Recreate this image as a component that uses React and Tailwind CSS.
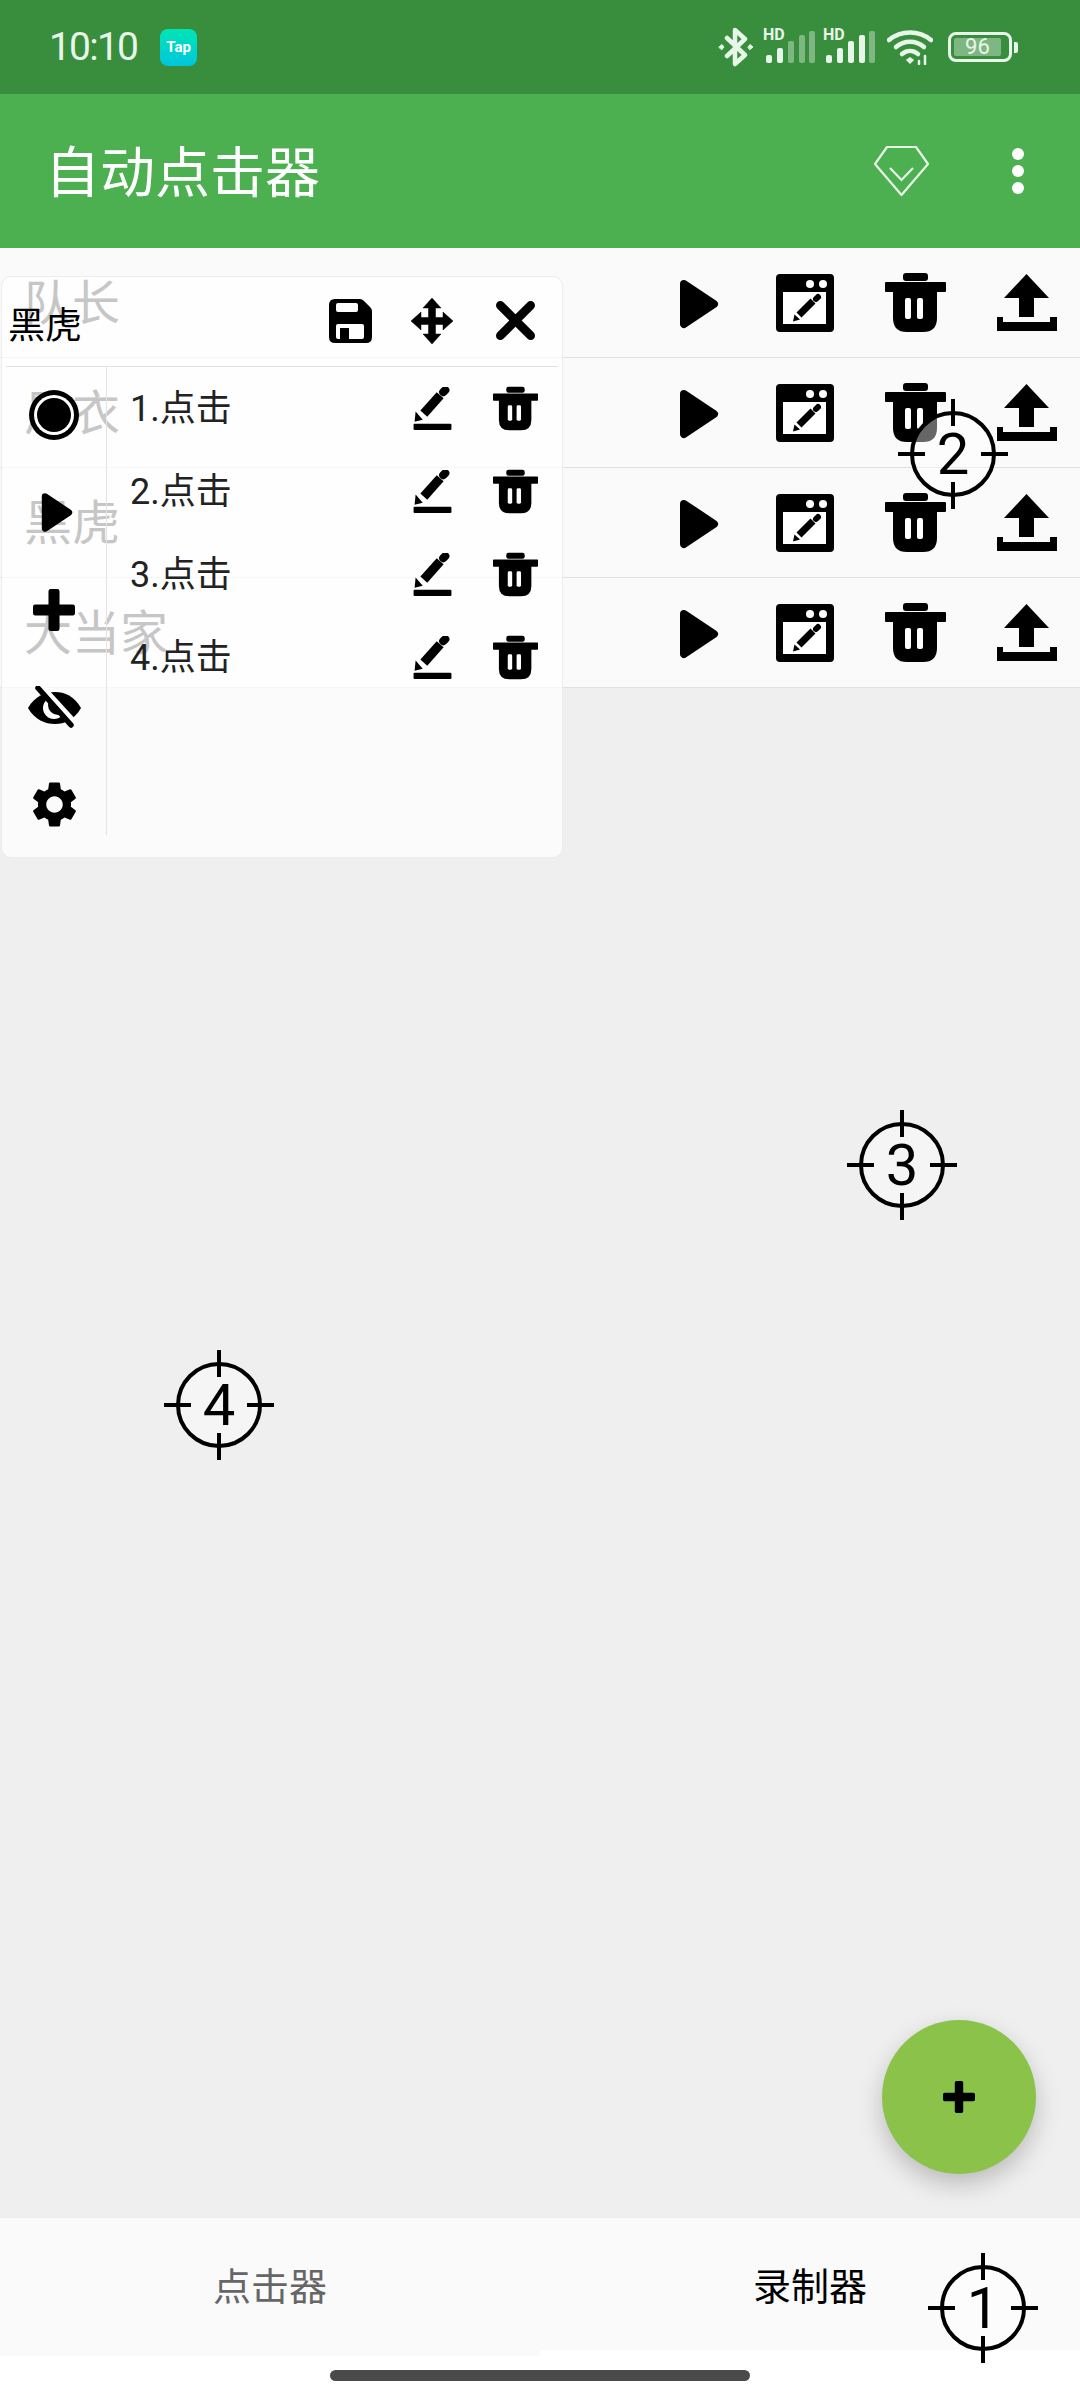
function Play({ w = 40, h = 50 }) {
  return (
    <svg width={w} height={h} viewBox="0 0 40 50" className="block">
      <path d="M5 5 L35 25 L5 45 Z" fill="#000" stroke="#000" strokeWidth="8" strokeLinejoin="round" />
    </svg>
  );
}
function WindowEdit() {
  return (
    <svg width="58" height="58" viewBox="0 0 58 58" className="block">
      <rect width="58" height="58" rx="4" fill="#000" />
      <rect x="7" y="18" width="43" height="32" fill="#fff" />
      <circle cx="34" cy="10" r="4" fill="#fff" />
      <circle cx="47" cy="10" r="4" fill="#fff" />
      <path d="M23 41 L37 27" stroke="#000" strokeWidth="7" />
      <path d="M40 25 L42 23" stroke="#000" strokeWidth="6" strokeLinecap="round" />
      <path d="M17 47.5 L18.5 40.5 L24 45.5 Z" fill="#000" />
    </svg>
  );
}
function Trash({ w = 61, h = 59 }) {
  return (
    <svg width={w} height={h} viewBox="0 0 61 59" className="block">
      <rect x="18" y="0" width="25" height="8" rx="3" fill="#000" />
      <rect x="0" y="9" width="61" height="10" rx="1" fill="#000" />
      <path d="M8 17 H52 V45 Q52 59 38 59 H22 Q8 59 8 45 Z" fill="#000" />
      <rect x="20" y="25" width="6" height="21" rx="2" fill="#fff" />
      <rect x="32" y="25" width="6" height="21" rx="2" fill="#fff" />
    </svg>
  );
}
function Upload() {
  return (
    <svg width="60" height="57" viewBox="0 0 60 57" className="block">
      <path d="M29.5 0 L52 24 H37 V43 H22 V24 H7 Z" fill="#000" />
      <path d="M0 43 H6 V48 H53 V43 H60 V57 H0 Z" fill="#000" />
    </svg>
  );
}
function Pen() {
  return (
    <svg width="43" height="44" viewBox="0 0 37 43" className="block">
      <rect x="0" y="36" width="37" height="6" rx="1" fill="#000" />
      <path d="M10 26 L26 8" stroke="#000" strokeWidth="9" />
      <path d="M29 5 L31 3" stroke="#000" strokeWidth="8" strokeLinecap="round" />
      <path d="M1 34 L2 24 L9 32 Z" fill="#000" />
    </svg>
  );
}
function Save() {
  return (
    <svg width="43" height="44" viewBox="0 0 43 44" className="block">
      <path d="M6 0 H31 Q33 0 35 2 L41 8 Q43 10 43 12 V38 Q43 44 37 44 H6 Q0 44 0 38 V6 Q0 0 6 0 Z" fill="#000" />
      <rect x="7" y="4" width="22" height="9" rx="2" fill="#fff" />
      <rect x="7" y="25" width="28" height="15" rx="2" fill="#fff" />
      <rect x="11" y="29" width="9" height="13" fill="#000" />
    </svg>
  );
}
function Move() {
  return (
    <svg width="44" height="46" viewBox="0 0 42 46" className="block">
      <path d="M21 0 L30 10 H24.5 V19.5 H32 V14 L42 23 L32 32 V26.5 H24.5 V36 H30 L21 46 L12 36 H17.5 V26.5 H10 V32 L0 23 L10 14 V19.5 H17.5 V10 H12 Z" fill="#000" stroke="#000" strokeWidth="0.5" strokeLinejoin="round" />
    </svg>
  );
}
function Close() {
  return (
    <svg width="39" height="39" viewBox="0 0 36 36" className="block">
      <path d="M4 4 L32 32 M32 4 L4 32" stroke="#000" strokeWidth="8" strokeLinecap="round" />
    </svg>
  );
}
function Record() {
  return (
    <svg width="50" height="50" viewBox="0 0 50 50" className="block">
      <circle cx="25" cy="25" r="25" fill="#000" />
      <circle cx="25" cy="25" r="20" fill="#fff" />
      <circle cx="25" cy="25" r="17" fill="#000" />
    </svg>
  );
}
function Plus({ size = 42 }) {
  return (
    <svg width={size} height={size} viewBox="0 0 38 38" className="block">
      <path d="M16 0 H22 Q24 0 24 2 V14 H36 Q38 14 38 16 V22 Q38 24 36 24 H24 V36 Q24 38 22 38 H16 Q14 38 14 36 V24 H2 Q0 24 0 22 V16 Q0 14 2 14 H14 V2 Q14 0 16 0 Z" fill="#000" />
    </svg>
  );
}
function EyeOff() {
  return (
    <svg width="55" height="42" viewBox="0 0 55 42" className="block">
      <path d="M1 22 C8 10 18 6 28 6 C38 6 47 10 54 22 C47 34 38 38 28 38 C18 38 8 34 1 22 Z" fill="#000" />
      <circle cx="27" cy="22" r="11" fill="#fff" />
      <circle cx="31" cy="19" r="10" fill="#000" />
      <path d="M13 1 L45 36" stroke="#fff" strokeWidth="9" />
      <path d="M11 2 L44 39" stroke="#000" strokeWidth="5.5" strokeLinecap="round" />
    </svg>
  );
}
function Gear() {
  return (
    <svg width="55" height="55" viewBox="0 0 24 24" className="block">
      <path fill="#000" d="M19.14 12.94c.04-.3.06-.61.06-.94 0-.32-.02-.64-.07-.94l2.03-1.58c.18-.14.23-.41.12-.61l-1.92-3.32c-.12-.22-.37-.29-.59-.22l-2.39.96c-.5-.38-1.03-.7-1.62-.94l-.36-2.54c-.04-.24-.24-.41-.48-.41h-3.84c-.24 0-.43.17-.47.41l-.36 2.54c-.59.24-1.13.57-1.62.94l-2.39-.96c-.22-.08-.47 0-.59.22L2.74 8.87c-.12.21-.08.47.12.61l2.03 1.58c-.05.3-.09.63-.09.94s.02.64.07.94l-2.03 1.58c-.18.14-.23.41-.12.61l1.92 3.32c.12.22.37.29.59.22l2.39-.96c.5.38 1.03.7 1.62.94l.36 2.54c.05.24.24.41.48.41h3.84c.24 0 .44-.17.47-.41l.36-2.54c.59-.24 1.13-.56 1.62-.94l2.39.96c.22.08.47 0 .59-.22l1.92-3.32c.12-.22.07-.47-.12-.61l-2.01-1.58zM12 15.6c-1.98 0-3.6-1.62-3.6-3.6s1.62-3.6 3.6-3.6 3.6 1.62 3.6 3.6-1.62 3.6-3.6 3.6z" />
    </svg>
  );
}
function Diamond() {
  return (
    <svg width="57" height="52" viewBox="0 0 57 52" className="block" fill="none" stroke="#e8f5e9" strokeWidth="2.2">
      <path d="M14 2 H43 L55 19 L28.5 50 L2 19 Z" strokeLinejoin="round" />
      <path d="M17 23 L28.5 35 L40 23" />
    </svg>
  );
}
function Bluetooth() {
  return (
    <svg width="36" height="40" viewBox="0 0 36 40" className="block" fill="none" stroke="#e8f5e9" strokeWidth="4.5" strokeLinecap="round" strokeLinejoin="round">
      <path d="M9 11 L27 28 L17 37 V3 L27 12 L9 29" />
      <path d="M1 20 L4 17.5 L6 20 L4 22.5 Z M30 20 L32 17.5 L35 20 L32 22.5 Z" fill="#e8f5e9" strokeWidth="1" />
    </svg>
  );
}
function Signal({ on }) {
  const bars = [
    { x: 3, h: 8 },
    { x: 14, h: 15 },
    { x: 25, h: 22 },
    { x: 36, h: 28 },
    { x: 46, h: 32 },
  ];
  return (
    <div className="relative w-[52px] h-[36px]">
      <span className="absolute left-0 top-[-2px] text-[16px] leading-[16px] font-bold text-[#e8f5e9] font-['Roboto',sans-serif]">HD</span>
      <svg width="52" height="36" viewBox="0 0 52 36" className="block">
        {bars.map((b, i) => (
          <rect key={b.x} x={b.x} y={34 - b.h} width="6" height={b.h} rx="2" fill="#e8f5e9" opacity={i < on ? 1 : 0.4} />
        ))}
      </svg>
    </div>
  );
}
function Wifi() {
  return (
    <svg width="46" height="36" viewBox="0 0 46 36" className="block" fill="none" stroke="#e8f5e9" strokeWidth="4.5" strokeLinecap="round">
      <path d="M2 11 C14 1 32 1 44 11" />
      <path d="M9 18 C17 11 29 11 37 18" />
      <path d="M15 25 C20 21 26 21 31 25" />
      <path d="M20 31 L23 34 L26 31 L23 29 Z" fill="#e8f5e9" strokeWidth="1.5" />
      <path d="M32 32 V35 M38 27 V35" strokeWidth="2.5" />
    </svg>
  );
}

function Target({ n, className }) {
  return (
    <div className={"absolute z-30 w-[110px] h-[110px] " + className}>
      <div className="absolute left-[12px] top-[12px] w-[86px] h-[86px] rounded-full bg-white/40 border-[4px] border-black" />
      <div className="absolute left-[53px] top-0 w-[4px] h-[27px] bg-black" />
      <div className="absolute left-[53px] bottom-0 w-[4px] h-[27px] bg-black" />
      <div className="absolute top-[53px] left-0 h-[4px] w-[27px] bg-black" />
      <div className="absolute top-[53px] right-0 h-[4px] w-[27px] bg-black" />
      <div className="absolute inset-0 flex items-center justify-center text-[58px] font-normal leading-none text-black font-['Roboto',sans-serif]">
        {n}
      </div>
    </div>
  );
}

function Row({ label }) {
  return (
    <div className="h-[110px] border-b border-[#e0e0e0] bg-[#fafafa] flex items-center pl-6 pr-[23px]">
      <span className="relative z-10 mt-[3px] text-[48px] leading-none text-[#c6c6c6]">{label}</span>
      <div className="ml-auto flex items-center">
        <div className="mt-[2px]"><Play /></div>
        <div className="ml-[57px]"><WindowEdit /></div>
        <div className="ml-[51px]"><Trash /></div>
        <div className="ml-[51px]"><Upload /></div>
      </div>
    </div>
  );
}

function Item({ label }) {
  return (
    <div className="h-[83px] flex items-center pl-[23px] pr-[24px]">
      <span className="flex-1 text-[36px] leading-none text-[#222222]">{label}</span>
      <Pen />
      <div className="ml-[39px]"><Trash w={45} h={45} /></div>
    </div>
  );
}

export default function App() {
  return (
    <div className="relative w-[1080px] h-[2400px] overflow-hidden flex flex-col bg-white font-['Roboto','Noto_Sans_CJK_SC',sans-serif]">
      {/* status bar */}
      <div className="h-[94px] bg-[#388e3c] flex items-center pl-[49px] pr-[62px]">
        <span className="text-[39px] leading-none tracking-[-1.8px] text-[#e8f5e9]">10:10</span>
        <div className="ml-[23px] w-[37px] h-[37px] rounded-[8px] bg-gradient-to-b from-[#00e5b5] to-[#00c6dc] flex items-center justify-center text-[15px] font-bold text-white">
          Tap
        </div>
        <div className="ml-auto flex items-center">
          <Bluetooth />
          <div className="ml-[9px]"><Signal on={2} /></div>
          <div className="ml-[8px]"><Signal on={4} /></div>
          <div className="ml-[12px]"><Wifi /></div>
          <div className="ml-[15px] w-[64px] h-[30px] rounded-[8px] border-[3px] border-[#e8f5e9] p-[3px]">
            <div className="h-full w-[90%] rounded-[2px] bg-[#e8f5e9]/40 flex items-center justify-center text-[22px] leading-none text-[#e8f5e9]">
              96
            </div>
          </div>
          <div className="ml-[2px] w-[4px] h-[11px] rounded-r-[2px] bg-[#e8f5e9]" />
        </div>
      </div>

      {/* toolbar */}
      <div className="h-[154px] bg-[#4caf50] flex items-center pl-[45px] pr-[56px]">
        <span className="mt-[4px] text-[55px] leading-none text-white">自动点击器</span>
        <div className="ml-auto"><Diamond /></div>
        <div className="ml-[82px] flex flex-col gap-[5px]">
          <div className="w-[12px] h-[12px] rounded-full bg-white" />
          <div className="w-[12px] h-[12px] rounded-full bg-white" />
          <div className="w-[12px] h-[12px] rounded-full bg-white" />
        </div>
      </div>

      {/* list */}
      <div className="flex-1 bg-[#efefef]">
        <Row label="队长" />
        <Row label="风衣" />
        <Row label="黑虎" />
        <Row label="大当家" />
      </div>

      {/* footer */}
      <div className="h-[182px] bg-white">
        <div className="flex items-start h-[138px]">
          <div className="flex-1 h-[138px] bg-[#fafafa] flex items-center justify-center text-[38px] text-[#666666]">
            点击器
          </div>
          <div className="flex-1 h-[132px] pt-[6px] bg-[#fafafa] flex items-center justify-center text-[38px] text-black">
            录制器
          </div>
        </div>
        <div className="mt-[14px] mx-auto w-[420px] h-[11px] rounded-full bg-[#4a4a4a]" />
      </div>

      {/* floating panel */}
      <div className="absolute left-[1px] top-[276px] w-[562px] h-[582px] rounded-[10px] bg-white/75 border border-[#ececec]">
        <div className="relative z-20 h-[90px] ml-[4px] mr-[4px] border-b border-[#e2e2e2] flex items-center">
          <span className="ml-[2px] mt-[10px] text-[37px] leading-none text-black">黑虎</span>
          <div className="ml-auto mr-[23px] mb-[2px] flex items-center">
            <Save />
            <div className="ml-[38px]"><Move /></div>
            <div className="ml-[42px]"><Close /></div>
          </div>
        </div>
        <div className="relative z-20 flex">
          <div className="w-[105px] h-[468px] border-r border-[#e4e4e4] flex flex-col">
            <div className="h-[96px] shrink-0 flex items-center justify-center"><Record /></div>
            <div className="h-[99px] shrink-0 flex items-center justify-center pl-[6px]"><Play w={32} h={41} /></div>
            <div className="h-[96px] shrink-0 flex items-center justify-center"><Plus /></div>
            <div className="h-[98px] shrink-0 flex items-center justify-center"><EyeOff /></div>
            <div className="h-[96px] shrink-0 flex items-center justify-center"><Gear /></div>
          </div>
          <div className="flex-1">
            <Item label="1.点击" />
            <Item label="2.点击" />
            <Item label="3.点击" />
            <Item label="4.点击" />
          </div>
        </div>
      </div>

      {/* FAB */}
      <div className="absolute left-[882px] top-[2020px] w-[154px] h-[154px] rounded-full bg-[#8bc34a] shadow-[0_10px_24px_rgba(0,0,0,0.22)] flex items-center justify-center">
        <Plus size={32} />
      </div>

      <Target n="2" className="left-[898px] top-[399px]" />
      <Target n="3" className="left-[847px] top-[1110px]" />
      <Target n="4" className="left-[164px] top-[1350px]" />
      <Target n="1" className="left-[928px] top-[2253px]" />
    </div>
  );
}
